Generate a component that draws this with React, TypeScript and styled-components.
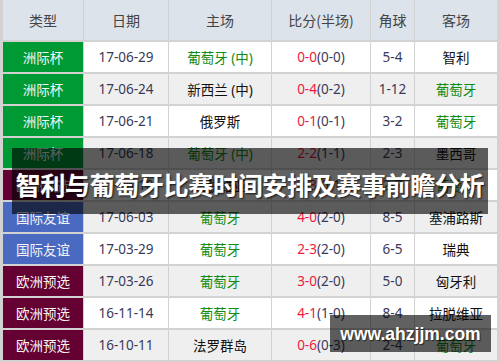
import React from "react";
import styled, { createGlobalStyle } from "styled-components";

const Global = createGlobalStyle`
  html, body { margin: 0; padding: 0; }
  body {
    width: 500px;
    height: 362px;
    overflow: hidden;
    background: #d4d4d4;
    font-family: "Noto Sans", "Noto Sans CJK SC", sans-serif;
  }
`;

const Frame = styled.div`
  position: relative;
  width: 500px;
  height: 362px;
  overflow: hidden;
  background: #d2d2d2;
`;

const Table = styled.div`
  display: grid;
  grid-template-columns: 80px 84px 102px 98px 43px 82px;
  grid-auto-rows: 30px;
  grid-template-rows: 40px;
  column-gap: 1px;
  row-gap: 2px;
  padding: 0 3px;
  background: #d2d2d2;
`;

const Head = styled.div`
  background: #dde3eb;
  color: #444;
  font-size: 14px;
  display: flex;
  align-items: center;
  justify-content: center;
  font-family: "Noto Sans CJK SC", sans-serif;
`;

const typeColors: Record<string, string> = {
  green: "#009a35",
  maroon: "#650032",
  blue: "#4a69c0",
};

const TypeCell = styled.div<{ $kind: string }>`
  background: ${(p) => typeColors[p.$kind]};
  color: #f4f4f4;
  font-size: 13.5px;
  display: flex;
  align-items: center;
  justify-content: center;
  font-family: "Noto Sans CJK SC", sans-serif;
`;

const Cell = styled.div<{ $alt: boolean; $color?: string }>`
  background: ${(p) => (p.$alt ? "#efefef" : "#ffffff")};
  color: ${(p) => p.$color || "#333"};
  font-size: 13.5px;
  display: flex;
  align-items: center;
  justify-content: center;
  white-space: nowrap;
  font-family: "Noto Sans", "Noto Sans CJK SC", sans-serif;
`;

const Red = styled.span`
  color: #f0193c;
`;

const Dark = styled.span`
  color: #3a3a5a;
`;

const TitleBand = styled.div`
  position: absolute;
  left: 12px;
  top: 148px;
  width: 476px;
  height: 66px;
  background: rgba(0, 0, 0, 0.62);
  display: flex;
  align-items: center;
  justify-content: center;
  padding-top: 7px;
  box-sizing: border-box;
`;

const Title = styled.div`
  color: #ffffff;
  font-family: "Noto Sans CJK SC", sans-serif;
  font-weight: 700;
  font-size: 25px;
  letter-spacing: -0.35px;
  line-height: 1;
  white-space: nowrap;
  text-shadow: 1px 1px 2px rgba(0, 0, 0, 0.85), 0 0 1px rgba(255, 255, 255, 0.6);
`;

const Watermark = styled.div`
  position: absolute;
  left: 330px;
  top: 315px;
  width: 161px;
  height: 37px;
  background: rgba(0, 0, 0, 0.62);
  display: flex;
  align-items: center;
  justify-content: center;
  color: #fff;
  font-family: "Liberation Sans", Arial, sans-serif;
  font-weight: 700;
  font-size: 17.5px;
  padding-top: 1px;
  box-sizing: border-box;
  text-shadow: 1px 1px 1px rgba(0, 0, 0, 0.6);
`;

const GREEN = "#138c13";
const BLACK = "#111";

type Row = {
  type: string;
  kind: string;
  date: string;
  home: string;
  homeGreen: boolean;
  score: string;
  half: string;
  corner: string;
  away: string;
  awayGreen: boolean;
};

const rows: Row[] = [
  { type: "洲际杯", kind: "green", date: "17-06-29", home: "葡萄牙 (中)", homeGreen: true, score: "0-0", half: "(0-0)", corner: "5-4", away: "智利", awayGreen: false },
  { type: "洲际杯", kind: "green", date: "17-06-24", home: "新西兰 (中)", homeGreen: false, score: "0-4", half: "(0-2)", corner: "1-12", away: "葡萄牙", awayGreen: true },
  { type: "洲际杯", kind: "green", date: "17-06-21", home: "俄罗斯", homeGreen: false, score: "0-1", half: "(0-1)", corner: "3-2", away: "葡萄牙", awayGreen: true },
  { type: "洲际杯", kind: "green", date: "17-06-18", home: "葡萄牙 (中)", homeGreen: true, score: "2-2", half: "(1-1)", corner: "2-3", away: "墨西哥", awayGreen: false },
  { type: "欧洲预选", kind: "maroon", date: "17-06-10", home: "拉脱维亚", homeGreen: false, score: "0-3", half: "(0-1)", corner: "2-7", away: "葡萄牙", awayGreen: true },
  { type: "国际友谊", kind: "blue", date: "17-06-03", home: "葡萄牙", homeGreen: true, score: "4-0", half: "(2-0)", corner: "8-5", away: "塞浦路斯", awayGreen: false },
  { type: "国际友谊", kind: "blue", date: "17-03-29", home: "葡萄牙", homeGreen: true, score: "2-3", half: "(2-0)", corner: "6-5", away: "瑞典", awayGreen: false },
  { type: "欧洲预选", kind: "maroon", date: "17-03-26", home: "葡萄牙", homeGreen: true, score: "3-0", half: "(2-0)", corner: "5-0", away: "匈牙利", awayGreen: false },
  { type: "欧洲预选", kind: "maroon", date: "16-11-14", home: "葡萄牙", homeGreen: true, score: "4-1", half: "(1-0)", corner: "8-4", away: "拉脱维亚", awayGreen: false },
  { type: "欧洲预选", kind: "maroon", date: "16-10-11", home: "法罗群岛", homeGreen: false, score: "0-6", half: "(0-3)", corner: "2-4", away: "葡萄牙", awayGreen: true },
];

const headers = ["类型", "日期", "主场", "比分(半场)", "角球", "客场"];

export default function App() {
  return (
    <>
      <Global />
      <Frame>
        <Table>
          {headers.map((h) => (
            <Head key={h}>{h}</Head>
          ))}
          {rows.map((r, i) => {
            const alt = i % 2 === 1;
            return (
              <React.Fragment key={r.date}>
                <TypeCell $kind={r.kind}>{r.type}</TypeCell>
                <Cell $alt={alt} $color="#3a3a5a">{r.date}</Cell>
                <Cell $alt={alt} $color={r.homeGreen ? GREEN : BLACK}>{r.home}</Cell>
                <Cell $alt={alt}>
                  <Red>{r.score}</Red>
                  <Dark>{r.half}</Dark>
                </Cell>
                <Cell $alt={alt} $color="#3a3a5a">{r.corner}</Cell>
                <Cell $alt={alt} $color={r.awayGreen ? GREEN : BLACK}>{r.away}</Cell>
              </React.Fragment>
            );
          })}
        </Table>
        <TitleBand>
          <Title>智利与葡萄牙比赛时间安排及赛事前瞻分析</Title>
        </TitleBand>
        <Watermark>www.ahzjjm.com</Watermark>
      </Frame>
    </>
  );
}
